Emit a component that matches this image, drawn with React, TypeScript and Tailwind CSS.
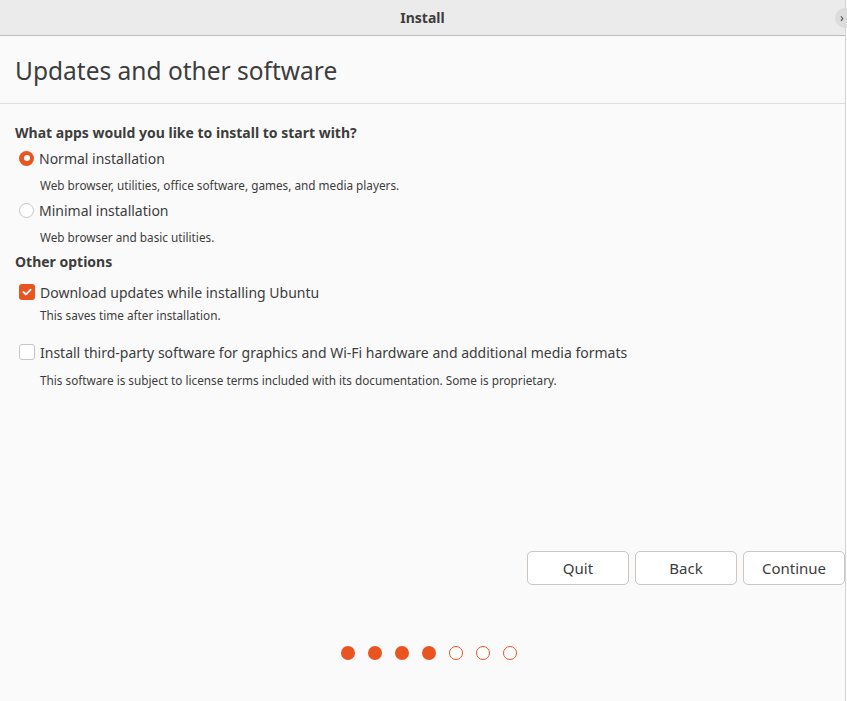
import React from "react";

const font = { fontFamily: '"Noto Sans", "Open Sans", sans-serif' };

const Radio = ({ checked }: { checked: boolean }) =>
  checked ? (
    <span className="w-[15px] h-[15px] rounded-full bg-[#e95420] flex items-center justify-center shrink-0">
      <span className="w-[6px] h-[6px] rounded-full bg-white" />
    </span>
  ) : (
    <span className="w-[15px] h-[15px] rounded-full border border-[#c6c6c6] bg-white shrink-0" />
  );

const Check = ({ checked }: { checked: boolean }) =>
  checked ? (
    <span className="w-[16px] h-[16px] rounded-[3px] bg-[#e95420] flex items-center justify-center shrink-0">
      <svg width="12" height="12" viewBox="0 0 12 12" fill="none">
        <path d="M2.4 6 L5 8.5 L9.6 3.6" stroke="white" strokeWidth="1.8" strokeLinecap="round" strokeLinejoin="round" />
      </svg>
    </span>
  ) : (
    <span className="w-[16px] h-[16px] rounded-[3px] border border-[#c6c6c6] bg-white shrink-0" />
  );

const Button = ({ label }: { label: string }) => (
  <button className="w-[102px] h-[34px] rounded-[5px] border border-[#cdc7c2] bg-white text-[15px] text-[#3d3d3d]">
    {label}
  </button>
);

export default function App() {
  const steps = [true, true, true, true, false, false, false];

  return (
    <div className="w-[847px] h-[701px] bg-[#fafafa] flex overflow-hidden text-[#3d3d3d]" style={font}>
      <div className="w-[846px] h-full flex flex-col border-r border-[#d4d4d4] shrink-0">
        {/* header bar */}
        <div className="h-[36px] bg-[#ebebeb] border-b border-[#c0bdbb] flex items-center justify-center relative shrink-0">
          <span className="text-[14px] font-bold text-[#3d3d3d]">Install</span>
          <span className="absolute right-[-10px] top-[8px] w-[20px] h-[20px] rounded-full bg-[#dcdcdc] flex items-center pl-[5px] text-[12px] text-[#444]">
            ›
          </span>
        </div>

        <div className="h-[68px] border-b border-[#e0e0e0] flex items-center px-[15px] pt-[3px] shrink-0">
          <h1 className="text-[24.5px] text-[#3d3d3d]">Updates and other software</h1>
        </div>

        <div className="flex-1 flex flex-col px-[15px] pt-[18px]">
          <div className="text-[14px] font-bold h-[20px] flex items-center">
            What apps would you like to install to start with?
          </div>

          <div className="flex items-center gap-[5px] pl-[4px] h-[20px] mt-[6px]">
            <Radio checked />
            <span className="text-[14px]">Normal installation</span>
          </div>
          <div className="pl-[25px] text-[11.75px] h-[20px] mt-[8px] flex items-center">
            Web browser, utilities, office software, games, and media players.
          </div>
          <div className="flex items-center gap-[5px] pl-[4px] h-[20px] mt-[4px]">
            <Radio checked={false} />
            <span className="text-[14px]">Minimal installation</span>
          </div>
          <div className="pl-[25px] text-[11.75px] h-[20px] mt-[8px] flex items-center">
            Web browser and basic utilities.
          </div>

          <div className="text-[14px] font-bold h-[20px] mt-[3px] flex items-center">Other options</div>

          <div className="flex items-center gap-[5px] pl-[4px] h-[20px] mt-[11px]">
            <Check checked />
            <span className="text-[14px]">Download updates while installing Ubuntu</span>
          </div>
          <div className="pl-[25px] text-[11.75px] h-[20px] mt-[4px] flex items-center">
            This saves time after installation.
          </div>

          <div className="flex items-center gap-[5px] pl-[4px] h-[20px] mt-[16px]">
            <Check checked={false} />
            <span className="text-[14px]">
              Install third-party software for graphics and Wi-Fi hardware and additional media formats
            </span>
          </div>
          <div className="pl-[25px] text-[11.75px] h-[20px] mt-[9px] flex items-center">
            This software is subject to license terms included with its documentation. Some is proprietary.
          </div>

          <div className="flex-1" />

          <div className="flex justify-end gap-[6px] mr-[-15px]">
            <Button label="Quit" />
            <Button label="Back" />
            <Button label="Continue" />
          </div>

          <div className="flex justify-center gap-[13px] pl-[13px] mt-[61px] mb-[41px]">
            {steps.map((done, i) =>
              done ? (
                <span key={i} className="w-[14px] h-[14px] rounded-full bg-[#e95420]" />
              ) : (
                <span key={i} className="w-[14px] h-[14px] rounded-full border-[1.5px] border-[#e95420] bg-white" />
              )
            )}
          </div>
        </div>
      </div>
    </div>
  );
}
